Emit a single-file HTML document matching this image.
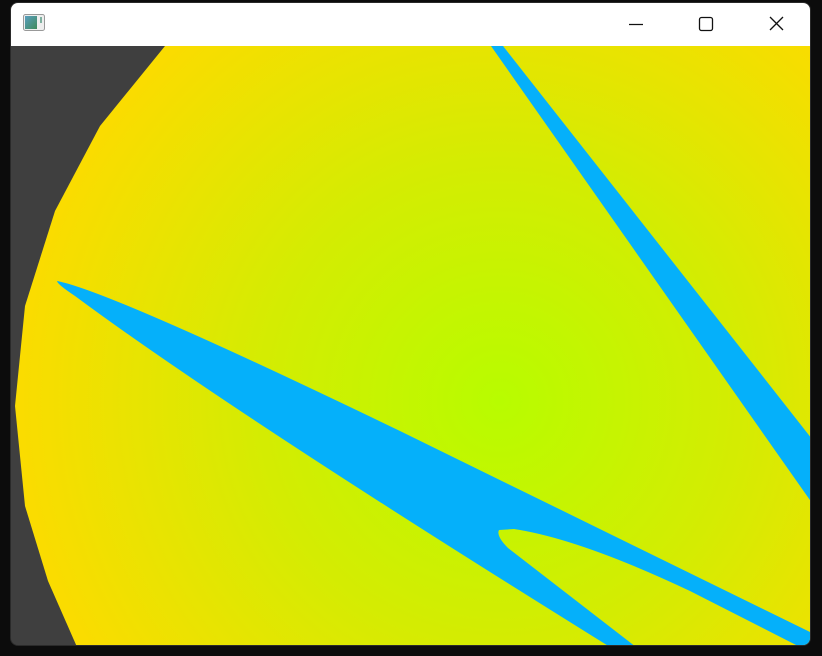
<!DOCTYPE html>
<html><head><style>
html,body{margin:0;padding:0;background:#0c0c0c;width:822px;height:656px;overflow:hidden;font-family:"Liberation Sans",sans-serif}
.win{position:absolute;left:10px;top:2px;width:801px;height:644px;border-radius:8px;overflow:hidden;background:#3f3f3f;border:1px solid #2a2a2a;box-sizing:border-box}
.tb{position:absolute;left:0;top:0;width:100%;height:43px;background:#fff}
svg.c{position:absolute;left:0;top:43px}
</style></head><body>
<div class="win">
 <div class="tb">
  <svg width="801" height="43" style="position:absolute;left:0;top:0">
   <defs><linearGradient id="ic" x1="0" y1="0" x2="1" y2="1"><stop offset="0" stop-color="#5a9fc0"/><stop offset="1" stop-color="#3f8a5a"/></linearGradient></defs>
   <rect x="12.5" y="11.5" width="21" height="16" rx="2" fill="#eee" stroke="#999"/>
   <rect x="14" y="13" width="12" height="13" fill="url(#ic)"/>
   <rect x="29" y="14" width="2" height="6" fill="#7fb0a0"/>
   <line x1="618" y1="21.5" x2="632" y2="21.5" stroke="#111" stroke-width="1.2"/>
   <rect x="688.5" y="14.5" width="13" height="13" rx="2" fill="none" stroke="#111" stroke-width="1.3"/>
   <path d="M759 14 L772 27 M772 14 L759 27" stroke="#111" stroke-width="1.3"/>
  </svg>
 </div>
 <svg class="c" width="801" height="601" viewBox="11 45 801 601">
  <defs><radialGradient id="g" cx="500" cy="400" r="480" gradientUnits="userSpaceOnUse">
   <stop offset="0" stop-color="#b8fc00"/><stop offset="0.5" stop-color="#d4ec02"/><stop offset="1" stop-color="#fadc00"/></radialGradient></defs>
  <rect x="11" y="45" width="801" height="601" fill="#3f3f3f"/>
  <polygon points="165,45 812,45 812,646 77,646 48,580 25,505 15,405 25,305 55,210 100,125" fill="url(#g)"/>
  <polygon points="491,45 503,45 812,438 812,502" fill="#05b0fa"/>
  <path d="M57,280 Q110,290 400,430 L812,632 L812,642 L800,646 L690,590 Q580,538 514,528 L499,529 Q496,535 508,547 L636,646 L610,646 Q230,410 75,295 Q57,283 57,280 Z" fill="#05b0fa"/>
 </svg>
</div>
</body></html>
